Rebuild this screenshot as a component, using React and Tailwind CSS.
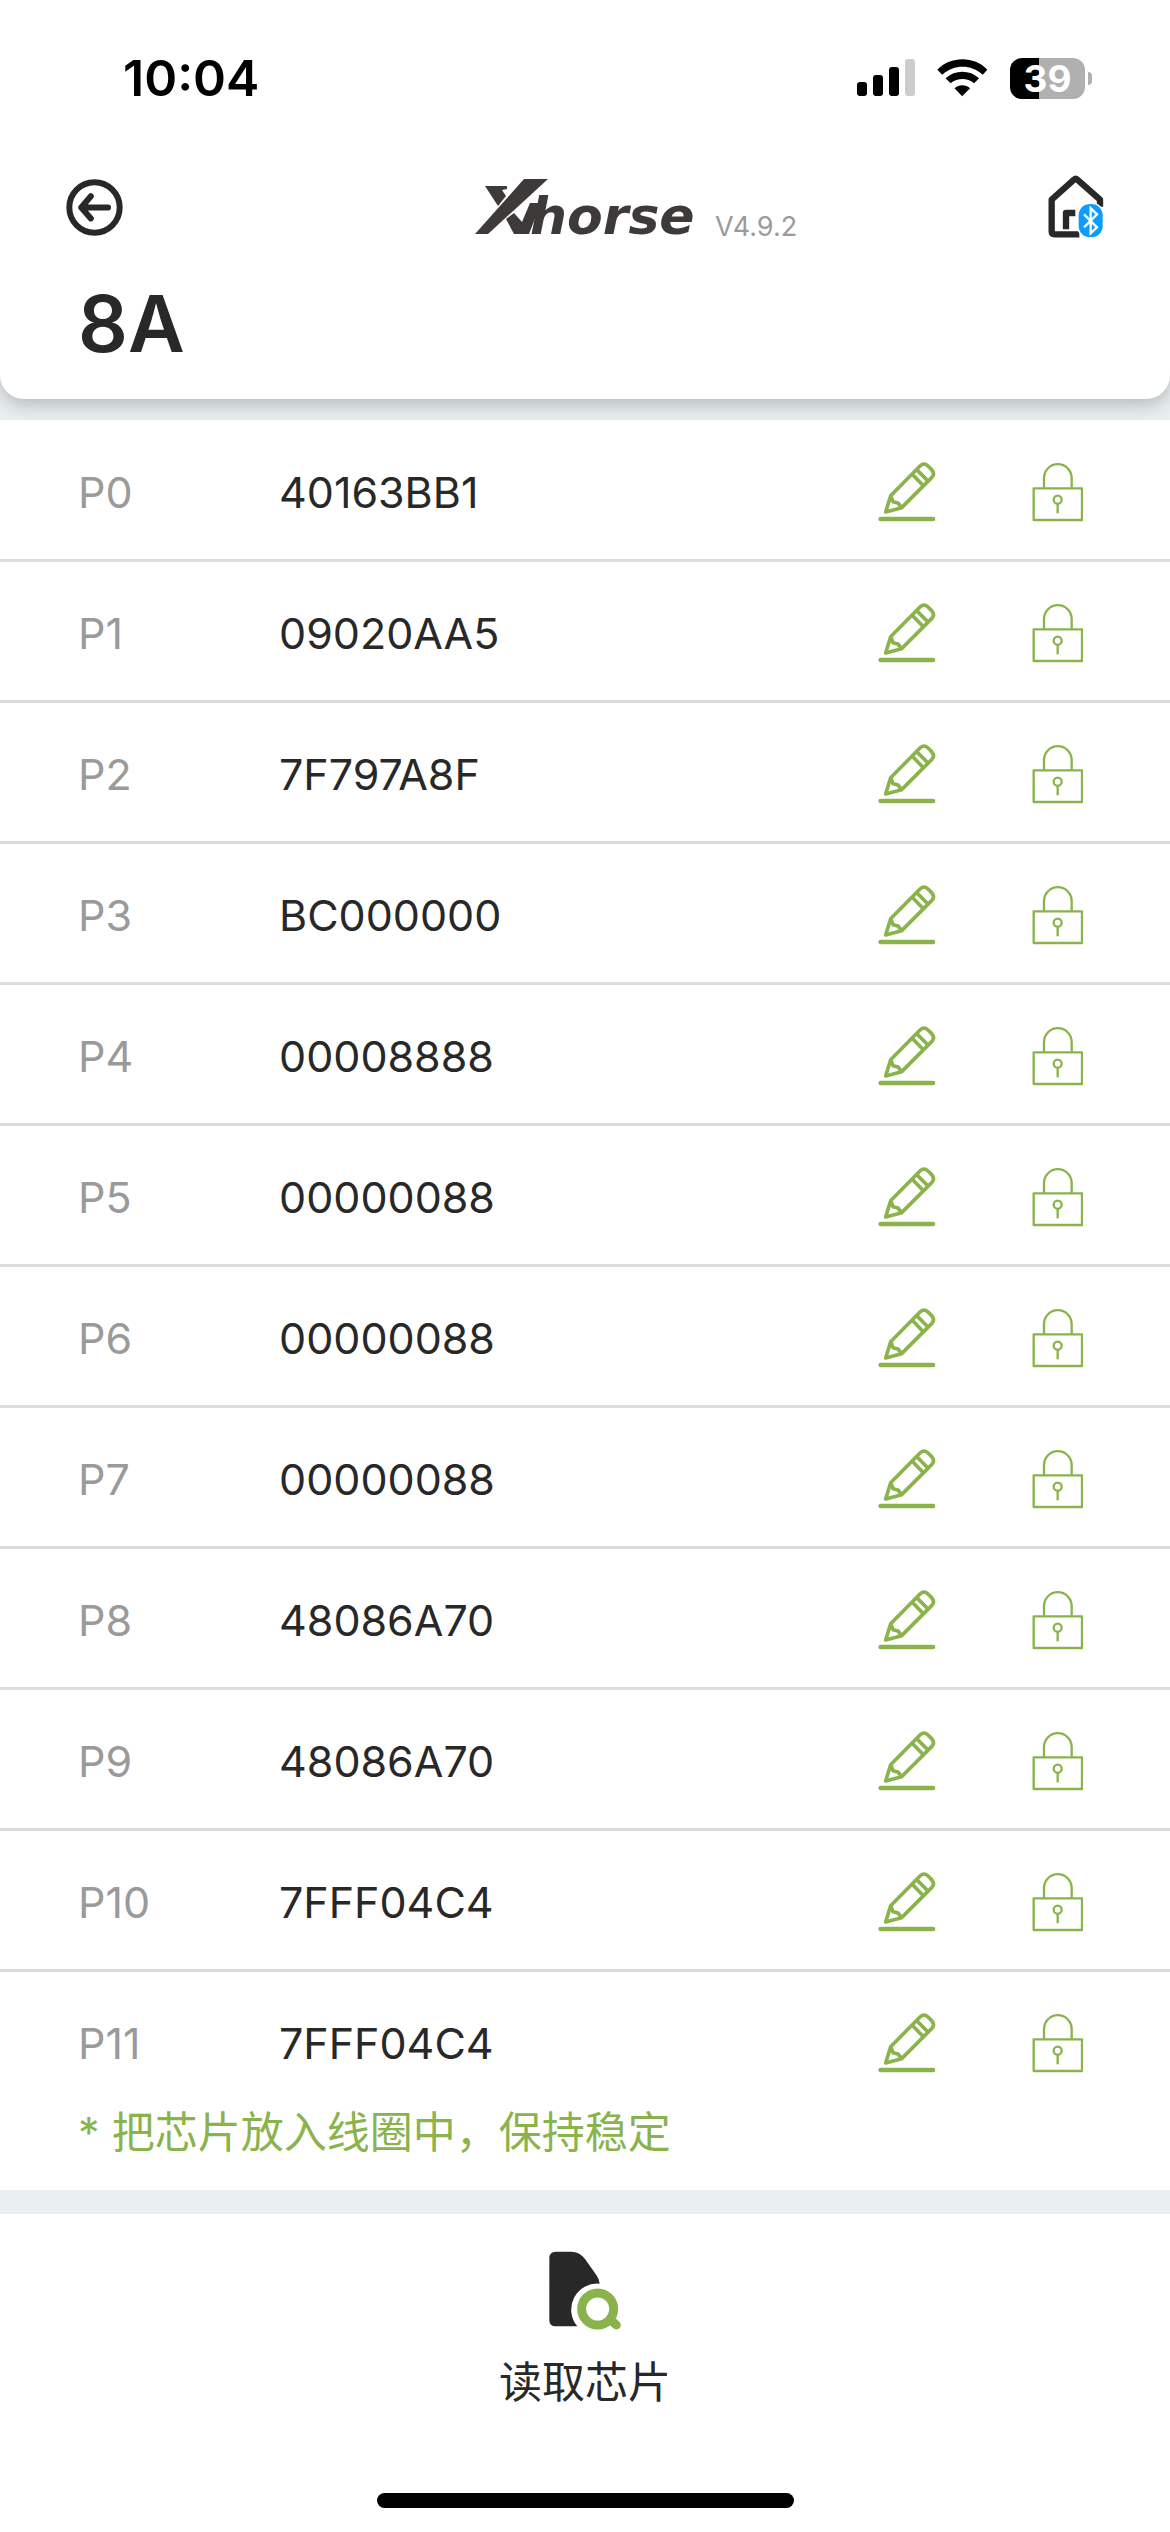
import React from "react";

const pages = [
  { name: "P0", value: "40163BB1" },
  { name: "P1", value: "09020AA5" },
  { name: "P2", value: "7F797A8F" },
  { name: "P3", value: "BC000000" },
  { name: "P4", value: "00008888" },
  { name: "P5", value: "00000088" },
  { name: "P6", value: "00000088" },
  { name: "P7", value: "00000088" },
  { name: "P8", value: "48086A70" },
  { name: "P9", value: "48086A70" },
  { name: "P10", value: "7FFF04C4" },
  { name: "P11", value: "7FFF04C4" },
];

const SignalIcon = () => (
  <svg viewBox="0 0 58 38" className="w-[58px] h-[38px]">
    <rect x="0" y="23" width="10" height="14" rx="3" />
    <rect x="16" y="16" width="10" height="21" rx="3" />
    <rect x="32" y="8" width="10" height="29" rx="3" />
    <rect x="48" y="0" width="10" height="37" rx="3" fill="#cccccc" />
  </svg>
);

const WifiIcon = () => (
  <svg viewBox="288 56 154 114" className="w-[51px] h-[38px]">
    <path d="M289 88 C330 46 400 46 440 88 L426 103 C390 71 340 71 304 103 Z" />
    <path d="M314 114 C342 88 387 88 415 114 L400 129 C378 112 352 112 329 129 Z" />
    <path d="M341 144 C354 132 375 132 388 144 L364 168 Z" />
  </svg>
);

const BackIcon = () => (
  <svg
    viewBox="80 56 172 172"
    className="w-[57px] h-[57px]"
    fill="none"
    stroke="#282828"
    strokeWidth="18"
    strokeLinecap="round"
    strokeLinejoin="round"
  >
    <circle cx="166" cy="142" r="76" />
    <path d="M207 142 H126 M155 108 L126 142 L155 175" />
  </svg>
);

const HomeIcon = () => (
  <svg viewBox="82 45 168 192" className="w-[56px] h-[64px]" fill="none">
    <g stroke="#282828" strokeWidth="19">
      <path
        d="M176 223 H102 Q93 223 93 214 V119 L160 59 Q165 54 170 59 L238 119 V140"
        strokeLinejoin="round"
      />
      <path d="M136 208 V159 H164" strokeLinejoin="round" />
    </g>
    <rect x="169" y="127" width="82" height="110" rx="40" fill="#fff" />
    <rect x="174" y="132" width="72" height="100" rx="34" fill="#0a9dff" />
    <path
      d="M190 163 L229 202 L210 220 V145 L229 163 L190 202"
      stroke="#fff"
      strokeWidth="7"
    />
  </svg>
);

const Logo = () => (
  <svg
    viewBox="0 0 220 58"
    className="w-[220px] h-[58px] overflow-visible"
    fill="#3e3a39"
    role="img"
    aria-label="Xhorse"
  >
    <path d="M0 56 L49 1 H73 L13 56 Z" />
    <path d="M10 8 H32 V11 L27 12 L31 18 L23 28 Z" />
    <path d="M31 41 L39 35 L47 44 L55 25 H66 L54 56 H39 Z" />
    <text
      x="55"
      y="56"
      fontSize="52"
      fontWeight="700"
      fontStyle="italic"
      className="font-['DejaVu_Sans',sans-serif]"
    >
      horse
    </text>
  </svg>
);

const PencilIcon = () => (
  <svg
    viewBox="50 65 174 180"
    className="w-[58px] h-[60px]"
    fill="none"
    stroke="#8ab34c"
    strokeWidth="11"
    strokeLinejoin="round"
  >
    <path d="M73 215 L88 166 L176 77 Q188 66 200 77 L211 88 Q222 100 211 112 L121 202 Z" />
    <path d="M88 166 L95 184 L110 188 L121 202 M152 101 L186 136 M166 88 L200 122" />
    <path d="M58 236 H215" strokeWidth="14" strokeLinecap="round" />
  </svg>
);

const LockIcon = () => (
  <svg
    viewBox="512 64 153 180"
    className="w-[51px] h-[60px]"
    fill="none"
    stroke="#8ab34c"
    strokeWidth="7"
    strokeLinejoin="round"
  >
    <rect x="517" y="143" width="145" height="95" />
    <path d="M548 143 V112 A41 41 0 0 1 631 112 V143" />
    <circle cx="589" cy="177" r="12" />
    <path d="M589 189 V218" />
  </svg>
);

const ReadChipIcon = () => (
  <svg viewBox="206 62 216 237" className="w-[72px] h-[79px]">
    <path
      d="M226 64 H272 Q298 64 314 86 L348 134 Q358 148 358 160 A78 78 0 0 0 291 288 H226 Q207 288 207 270 V84 Q207 64 226 64 Z"
      fill="#282828"
    />
    <circle cx="352" cy="236" r="48" fill="none" stroke="#8ab34c" strokeWidth="27" />
    <path d="M390 268 L408 284" stroke="#8ab34c" strokeWidth="27" strokeLinecap="round" />
  </svg>
);

const StatusBar = () => (
  <div className="flex items-center justify-between pl-[123px] pr-[78px] pt-[46px]">
    <span className="text-[50px] leading-[64px] font-semibold text-black">10:04</span>
    <div className="flex items-center">
      <SignalIcon />
      <span className="ml-[22px]">
        <WifiIcon />
      </span>
      {/* Battery */}
      <div className="ml-[22px] flex h-[41px] w-[75px] items-center justify-center rounded-xl bg-[linear-gradient(to_right,#000_39%,#b0b0b0_39%)] text-[37px] leading-[41px] font-bold text-white">
        39
      </div>
      <div className="ml-[3px] h-[13px] w-1 rounded-r-full bg-[#b0b0b0]" />
    </div>
  </div>
);

const Header = () => (
  <header className="rounded-b-3xl bg-white shadow-[0_6px_18px_rgba(0,0,0,0.22)]">
    <StatusBar />
    <div className="mt-[65px] grid grid-cols-[1fr_auto_1fr] items-center px-[66px]">
      <button type="button" aria-label="Back" className="justify-self-start">
        <BackIcon />
      </button>
      <Logo />
      <div className="flex items-end justify-between">
        <span className="ml-5 text-[27px] leading-6 text-[#9a9a9a]">V4.9.2</span>
        <button type="button" aria-label="Home">
          <HomeIcon />
        </button>
      </div>
    </div>
    <h1 className="px-[78px] pt-[37px] pb-[27px] text-[78px] leading-[96px] font-semibold text-[#282828]">
      8A
    </h1>
  </header>
);

const App = () => {
  return (
    <div className="flex min-h-screen flex-col bg-[#e9eef1] font-['Inter','Noto_Sans_CJK_SC',sans-serif]">
      <Header />

      {/* Chip pages */}
      <main className="mt-[21px] bg-white pt-px">
        <table className="w-full border-separate border-spacing-0 text-left text-[43px] leading-[52px]">
          <tbody>
            {pages.map((page) => (
              <tr key={page.name} className="group">
                <th
                  scope="row"
                  className="h-[141px] w-[279px] border-b-[3px] border-[#dcdcdc] pt-[3px] pl-[78px] font-normal text-[#9a9a9a] group-last:border-transparent"
                >
                  {page.name}
                </th>
                <td className="border-b-[3px] border-[#dcdcdc] pt-[3px] text-[#282828] group-last:border-transparent">
                  {page.value}
                </td>
                <td className="border-b-[3px] border-[#dcdcdc] pt-[3px] pr-[87px] group-last:border-transparent">
                  <div className="flex justify-end gap-24">
                    <button type="button" aria-label={`Edit ${page.name}`}>
                      <PencilIcon />
                    </button>
                    <button type="button" aria-label={`Lock ${page.name}`}>
                      <LockIcon />
                    </button>
                  </div>
                </td>
              </tr>
            ))}
          </tbody>
        </table>
        <p className="px-[78px] pb-[39px] text-[43px] leading-[38px] text-[#8ab34c]">
          * 把芯片放入线圈中，保持稳定
        </p>
      </main>

      {/* Bottom action */}
      <footer className="mt-6 flex flex-1 flex-col items-center justify-between bg-white pt-[37px] pb-6">
        <button
          type="button"
          className="flex flex-col items-center gap-5 text-[43px] leading-[64px] text-[#282828]"
        >
          <ReadChipIcon />
          读取芯片
        </button>
        <div className="h-[15px] w-[417px] rounded-full bg-black" />
      </footer>
    </div>
  );
};

export default App;
